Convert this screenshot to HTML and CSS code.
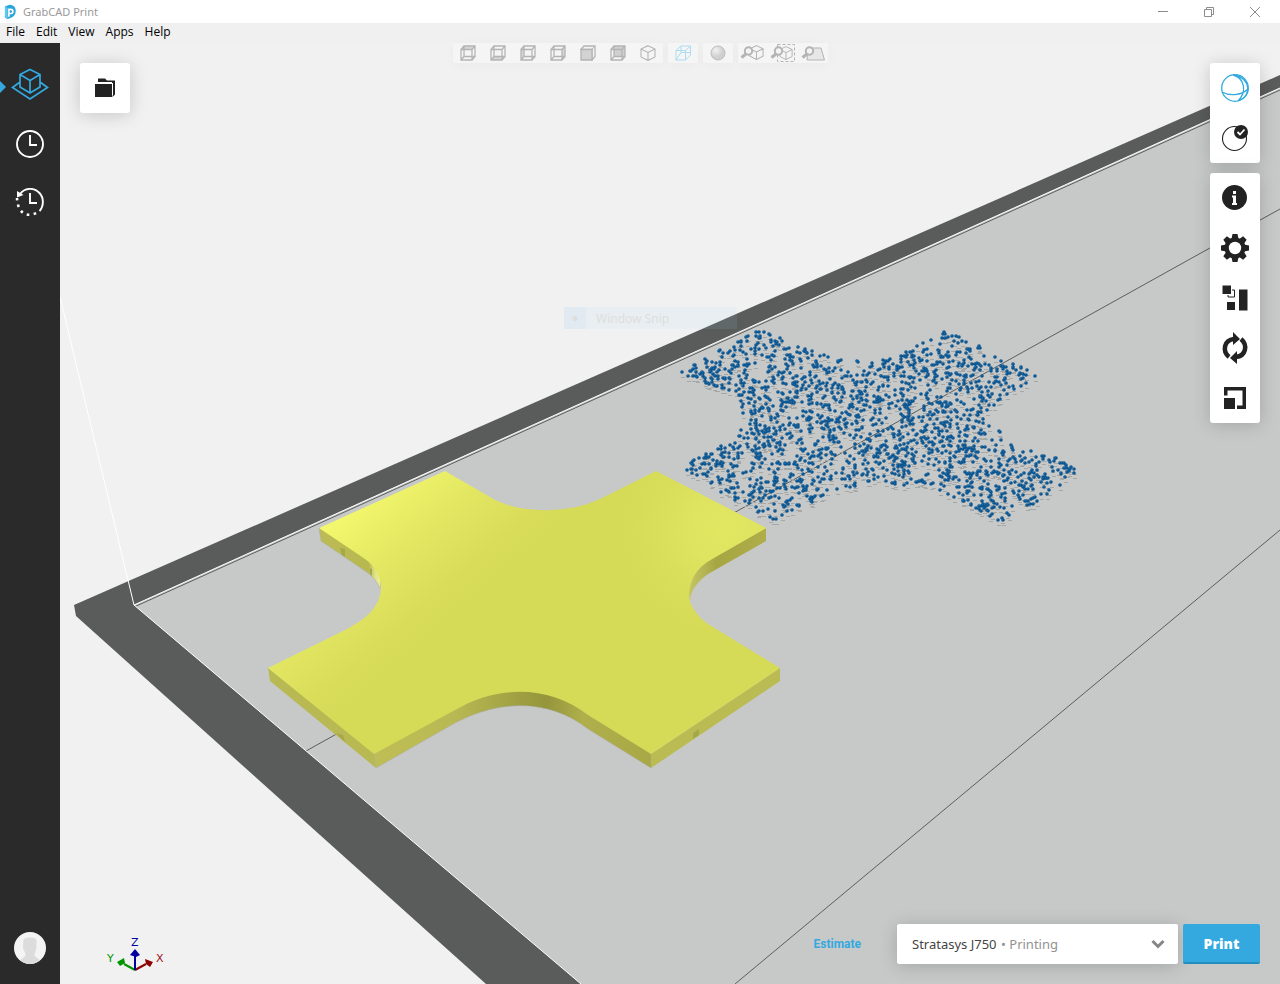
FILE: index.html
```html
<!DOCTYPE html>
<html lang="en">
<head>
<meta charset="utf-8">
<title>GrabCAD Print</title>
<link rel="stylesheet" href="styles.css">
</head>
<body>
<svg class="defs" aria-hidden="true">
  <symbol id="cube" viewBox="0 0 16 16">
    <path d="M1 4.500H12V15H1ZM4 1H15V11.500H4ZM1 4.500 4 1M12 4.500 15 1M12 15 15 11.500M1 15 4 11.500" fill="none" stroke="currentColor" stroke-width="1.300"/>
  </symbol>
  <symbol id="iso" viewBox="0 0 16 16">
    <path d="M8 .7 15 4V12L8 15.500 1 12V4ZM1 4 8 7.500 15 4M8 7.500V15.500" fill="none" stroke="currentColor" stroke-width="1.100"/>
  </symbol>
  <symbol id="lens" viewBox="0 0 14 14">
    <circle cx="8.500" cy="5" r="3.700" fill="#f4f4f4" stroke="currentColor" stroke-width="2"/>
    <path d="M6 8 1.500 11.500" stroke="currentColor" stroke-width="3"/>
  </symbol>
</svg>

<div class="app">
  <header class="titlebar">
    <svg class="logo" viewBox="0 0 14 16"><path d="M1 2 6 .3C11 .5 13 4 12.500 8 12 12 9 14.500 3.500 15.500L1 14Z" fill="#27a5dd"/><path d="M1 2 4 3.300V15.500L1 14Z" fill="#62c5ee"/><path d="M5.300 13V5.200H7.200C10.400 5.200 10.400 9.700 7.200 9.700H5.500" fill="none" stroke="#fff" stroke-width="1.700"/></svg>
    <span class="title">GrabCAD Print</span>
    <div class="window-buttons">
      <button aria-label="Minimize"><svg viewBox="0 0 12 12"><path d="M1 5.500H11"/></svg></button>
      <button aria-label="Restore"><svg viewBox="0 0 12 12"><path d="M1.500 3.500H8.500V10.500H1.500ZM3.500 3.500V1.500H10.500V8.500H8.500"/></svg></button>
      <button aria-label="Close"><svg viewBox="0 0 12 12"><path d="M1 1 11 11M11 1 1 11"/></svg></button>
    </div>
  </header>
  <nav class="menubar" aria-label="Menu">
    <button>File</button><button>Edit</button><button>View</button><button>Apps</button><button>Help</button>
  </nav>

  <div class="workspace">
    <nav class="sidebar" aria-label="Sections">
      <button class="side active" aria-label="Tray"><svg width="38" height="34" viewBox="0 0 38 34" fill="none" stroke="#33a9df" stroke-width="1.700"><path d="M19 1.500 29 6.500V19L19 25 9 19V6.500ZM9 6.500 19 12.500 29 6.500M19 12.500V25M9 14 1.500 19.500 19 31 36.500 19.500 29 14"/></svg></button>
      <button class="side" aria-label="Schedule"><svg width="30" height="30" viewBox="0 0 30 30" fill="none" stroke="#fff" stroke-width="1.900"><circle cx="15" cy="15" r="13"/><path d="M15 6V16H22"/></svg></button>
      <button class="side" aria-label="History"><svg width="30" height="30" viewBox="0 0 30 30" fill="none" stroke="#fff" stroke-width="1.900"><path d="M5 6C10 -.5 19 -.8 24.500 5 29 10 29 18 24.500 23"/><path d="M24.500 23C17 29 3 30 2 10" stroke-width="2.600" stroke-dasharray="2.600 4.400" stroke-dashoffset="-4"/><path d="M15 5V15H22"/><path d="M2 3V9.500L8.500 7Z" fill="#fff" stroke="none"/></svg></button>
      <button class="avatar" aria-label="Account"><svg width="32" height="32" viewBox="0 0 32 32"><clipPath id="round"><circle cx="16" cy="16" r="16"/></clipPath><g clip-path="url(#round)"><path fill="#f4f4f4" d="M0 0H32V32H0Z"/><path fill="#dcdcdc" d="M9.500 8C10 5 22 4.500 22.500 8V15C22.500 18 20.500 20 20.500 23 21 26 26 26 28 32H4C6 26 11 26 11.500 23 11.500 20 9 18 9 15Z"/></g></svg></button>
    </nav>

    <main class="viewport">
      <svg class="scene" viewBox="60 43 1220 941" preserveAspectRatio="xMidYMid slice" role="img" aria-label="Build tray with two models">
        <defs>
          <linearGradient id="top" gradientUnits="userSpaceOnUse" x1="350" y1="510" x2="450" y2="625"><stop offset="0" stop-color="#f2f76d"/><stop offset=".4" stop-color="#e3e762"/><stop offset=".8" stop-color="#d8dc59"/><stop offset="1" stop-color="#d5da57"/></linearGradient>
          <radialGradient id="glow" gradientUnits="userSpaceOnUse" cx="725" cy="530" r="120"><stop offset="0" stop-color="#e2e762"/><stop offset=".3" stop-color="#dfe460"/><stop offset="1" stop-color="#d6da58" stop-opacity="0"/></radialGradient>
          <linearGradient id="arch" gradientUnits="userSpaceOnUse" x1="376" y1="0" x2="651" y2="0"><stop offset="0" stop-color="#bfbe55"/><stop offset=".28" stop-color="#b9b954"/><stop offset=".46" stop-color="#a5a646"/><stop offset=".62" stop-color="#95953c"/><stop offset=".75" stop-color="#afaf4b"/><stop offset="1" stop-color="#a8a846"/></linearGradient>
          <linearGradient id="bay" gradientUnits="userSpaceOnUse" x1="320" y1="0" x2="381" y2="0"><stop offset="0" stop-color="#bcbb55"/><stop offset=".8" stop-color="#b8b850"/><stop offset=".9" stop-color="#dfe184"/><stop offset="1" stop-color="#f0f39d"/></linearGradient>
          <linearGradient id="wing" gradientUnits="userSpaceOnUse" x1="689" y1="0" x2="766" y2="0"><stop offset="0" stop-color="#c4c564"/><stop offset=".25" stop-color="#b1b04e"/><stop offset=".35" stop-color="#a6a643"/><stop offset="1" stop-color="#aead49"/></linearGradient>
        </defs>
        <path fill="#f1f1f1" d="M60 43H1280V984H60Z"/>
        <path fill="#5a5c5b" d="M74 605 1280 75V984H486L76 616Z"/>
        <path fill="#c7c9c8" d="M134 605 1280 88V984H581Z"/>
        <path fill="none" stroke="#5c5e5d" d="M134 607 1280 90M306 751 1280 209M735 984 1280 530"/>
        <path fill="none" stroke="#fff" d="M60 297 134 605 581 984M134 605 1280 88"/>
        <path id="shadows" fill="#a6a8a7"/>
        <path id="dots" fill="#0b5590"/>
        <path id="shine" fill="#1f6ca6"/>
        <path fill="url(#bay)" stroke="#adadad" stroke-width=".5" d="M319 528 321 541 368 573Q376 579 380 588L381 575 370 555Z"/>
        <path fill="url(#wing)" d="M766 528V541L708 574Q691 586 690 601L688 584 705 555Z"/>
        <path fill="#b8b953" d="M268 668 270 681 376 768 374 750Z"/>
        <path fill="url(#arch)" stroke="#adadad" stroke-width=".5" d="M374 754 376 768 455 723C500 699 550 699 588 729L651 768V750L588 710C550 680 500 680 455 704Z"/>
        <path fill="#babb52" d="M651 754V768L780 681V668Z"/>
        <path fill="url(#top)" d="M445 471 490 497C515 513 568 516 604 497L656 471 766 528 712 559C696 568 689 580 689 597 691 608 698 617 708 624L780 668 651 754 588 715C550 686 500 684 455 710L374 754 268 668 347 629C367 618 380 607 381 588 381 576 374 565 365 559L319 528Z"/>
        <path fill="url(#glow)" d="M604 497 656 471 766 528 712 559C696 568 689 580 689 597 691 608 698 617 708 624L640 660 560 560Z"/>
        <path fill="#a6a749" d="M340 548 345 549V557L342 555ZM336 733 343 735 345 742ZM370 568 372 569V576L370 574ZM693 733 699 729V735L693 739Z"/>
      </svg>

      <button class="card folder" aria-label="Open project"><svg width="22" height="22" viewBox="0 0 22 22" fill="#222"><path d="M1 7H18V20H1ZM4 1.500H11L13 3.500H21V17.500L18.500 20V18.500L19 18V6H18V5H4Z"/></svg></button>

      <aside class="tools">
        <div class="panel">
          <button aria-label="Model view"><svg viewBox="0 0 30 30" fill="none" stroke="#33a9df" stroke-width="1.300"><circle cx="15" cy="15" r="13.300"/><path d="M2 19C9 23 21 23 28 16M13 2C25 5 27 19 18 28M15 2C31 6 31 23 20 27"/></svg></button>
          <button aria-label="Validate"><svg viewBox="0 0 30 30"><circle cx="14.500" cy="15.500" r="12" fill="none" stroke="#222" stroke-width="1.100"/><circle cx="21" cy="9" r="7" fill="#222"/><path d="M17.500 9 20 11.500 24.500 6.500" fill="none" stroke="#fff" stroke-width="1.800"/></svg></button>
        </div>
        <div class="panel">
          <button aria-label="Information"><svg viewBox="0 0 30 30"><circle cx="14.500" cy="14.500" r="12.500" fill="#222"/><path fill="#fff" d="M13 8H16V11H13ZM12 12.500H16V20H17V22H12V20H13V14.500H12Z"/></svg></button>
          <button aria-label="Settings"><svg viewBox="-15 -15 30 30"><g fill="#222"><circle r="10.500"/><path id="teeth" d="M-2.500-14H2.500L3.500-9H-3.500ZM-2.500 14H2.500L3.500 9H-3.500ZM-14-2.500V2.500L-9 3.500V-3.500ZM14-2.500V2.500L9 3.500V-3.500Z"/><use href="#teeth" transform="rotate(45)"/></g><circle r="6.200" fill="#fff"/></svg></button>
          <button aria-label="Arrange"><svg viewBox="0 0 30 30" fill="#222"><path d="M2.500 2.500H11V11H2.500ZM7 19H15V27H7ZM19 6.500H27.500V27.500H19Z"/><path d="M12 7H14.500V14H8V12" fill="none" stroke="#222"/></svg></button>
          <button aria-label="Orient"><svg viewBox="0 0 30 34" fill="none" stroke="#222" stroke-width="4.500"><path d="M9 26C2 20 4 9 14 8M21 8C28 14 26 25 16 26"/><path fill="#222" stroke="none" d="M13 1 20 8 13 14ZM17 33V20L10 27Z"/></svg></button>
          <button aria-label="Scale"><svg viewBox="0 0 30 30" fill="#222"><path d="M4 15H15V26H4ZM4 4H26V26H17V22.500H22.500V7.500H7.500V12.500H4Z"/></svg></button>
        </div>
      </aside>

      <svg class="triad" width="70" height="40" viewBox="0 0 70 40" role="img" aria-label="Axes">
        <path d="M35 34 24 28" stroke="#009500" stroke-width="2"/><path d="M35 34 46 28" stroke="#8b0000" stroke-width="2"/><path d="M35 34V18" stroke="#0000a0" stroke-width="2"/>
        <path d="M17 26 24 22 25 27 20 30Z" fill="#009500"/><path d="M53 26 45 23 46 28 50 31Z" fill="#8b0000"/><path d="M30 19 35 13 40 19 36 21Z" fill="#0000a0"/>
        <text x="7" y="26" fill="#009500">Y</text><text x="31" y="10" fill="#0000a0">Z</text><text x="56" y="26" fill="#a01010">X</text>
      </svg>

      <form class="printbar">
        <button type="button" class="estimate">Estimate</button>
        <label class="printer">
          <select aria-label="Printer"><option>Stratasys J750</option></select>
          <span class="status">• Printing</span>
          <svg class="chevron" width="14" height="10" viewBox="0 0 14 10"><path d="M1.500 2 7 7.500 12.500 2" fill="none" stroke="#858585" stroke-width="3"/></svg>
        </label>
        <button type="button" class="print">Print</button>
      </form>
    </main>

    <div class="viewbar">
      <div class="group">
        <button aria-label="Top"><svg viewBox="0 0 16 16"><path d="M1 4.500 4 1H15L12 4.500Z" fill="#d6d6d6"/><use href="#cube"/></svg></button>
        <button aria-label="Bottom"><svg viewBox="0 0 16 16"><path d="M1 15 4 11.500H15L12 15Z" fill="#d6d6d6"/><use href="#cube"/></svg></button>
        <button aria-label="Left"><svg viewBox="0 0 16 16"><path d="M1 4.500 4 1V11.500L1 15Z" fill="#d6d6d6"/><use href="#cube"/></svg></button>
        <button aria-label="Right"><svg viewBox="0 0 16 16"><path d="M12 4.500 15 1V11.500L12 15Z" fill="#d6d6d6"/><use href="#cube"/></svg></button>
        <button aria-label="Front"><svg viewBox="0 0 16 16"><path d="M1 4.500 4 1H15V11.500L12 15V4.500Z" fill="#f5f5f5" stroke="currentColor" stroke-width="1.300"/><path d="M1 4.500H12V15H1Z" fill="#d3d3d3" stroke="currentColor" stroke-width="1.300"/><path d="M12 4.500 15 1" stroke="currentColor"/></svg></button>
        <button aria-label="Back"><svg viewBox="0 0 16 16"><path d="M4 1H15V11.500H4Z" fill="#d0d0d0"/><use href="#cube"/></svg></button>
        <button aria-label="Isometric"><svg viewBox="0 0 16 16"><use href="#iso"/></svg></button>
      </div>
      <div class="group"><button class="on" aria-label="Perspective"><svg viewBox="0 0 16 16"><path d="M1 5.500H10.500V15H1ZM1 5.500 6 1H15.500L10.500 5.500M15.500 1V10L10.500 15M6 1V7.500H15.500M1 15 6 7.500" fill="none" stroke="currentColor"/></svg></button></div>
      <div class="group"><button aria-label="Shading"><svg viewBox="0 0 16 16"><defs><radialGradient id="ball" cx=".35" cy=".3"><stop stop-color="#f2f2f2"/><stop offset="1" stop-color="#cfcfcf"/></radialGradient></defs><circle cx="8" cy="8" r="7" fill="url(#ball)" stroke="#bdbdbd"/></svg></button></div>
      <div class="group">
        <button aria-label="Zoom to model"><svg class="wide" viewBox="0 0 24 18"><use href="#iso" x="8" y="1" width="15" height="15"/><use href="#lens" x="-1" y="2" width="14" height="14"/></svg></button>
        <button aria-label="Zoom to selection"><svg class="wide" viewBox="0 0 24 18"><path d="M6.500 .5H23.500V17.500H6.500Z" fill="none" stroke="currentColor" stroke-dasharray="3 2"/><use href="#iso" x="8" y="2" width="14" height="14"/><use href="#lens" x="-1" y="2" width="14" height="14"/></svg></button>
        <button aria-label="Zoom to tray"><svg class="wide" viewBox="0 0 24 18"><path d="M7 4H20L23.500 16H6Z" fill="#e7e7e7" stroke="currentColor"/><use href="#lens" x="0" y="2" width="14" height="14"/></svg></button>
      </div>
    </div>
    <div class="snip"><span class="snip-dot">●</span><span class="snip-text">Window Snip</span></div>
  </div>
</div>
<script src="scene.js"></script>
</body>
</html>
```

FILE: styles.css
```css
* { box-sizing: border-box; }
body { margin: 0; font-family: "Open Sans", "Noto Sans", sans-serif; font-size: 12px; color: #222; }
button { margin: 0; padding: 0; border: 0; background: none; font: inherit; color: inherit; cursor: pointer; }
svg { display: block; flex: none; }
.defs { position: absolute; width: 0; height: 0; }
.app { display: flex; flex-direction: column; height: 100vh; overflow: hidden; }

.titlebar { display: flex; align-items: center; height: 23px; padding-left: 4px; background: #fff; }
.logo { width: 13px; height: 16px; }
.title { margin-left: 6px; color: #999; font-family: "Noto Sans", sans-serif; font-size: 11px; }
.window-buttons { display: flex; margin-left: auto; padding-right: 2px; }
.window-buttons button { display: grid; place-items: center; width: 46px; height: 20px; }
.window-buttons svg { width: 12px; height: 12px; fill: none; stroke: #8c8c8c; }
.menubar { display: flex; align-items: flex-start; gap: 11px; height: 20px; padding-left: 6px; background: #f0f0f0; color: #000; line-height: 18px; }

.workspace { position: relative; display: flex; flex: 1; min-height: 0; }
.sidebar { display: flex; flex-direction: column; width: 60px; padding: 12px 0 20px; background: #2a2a2a; }
.side { position: relative; display: grid; place-items: center; height: 59px; }
.active::before { content: ""; position: absolute; left: 0; top: 26px; border: 6px solid transparent; border-left-color: #33a9df; border-right-width: 0; }
.avatar { margin: auto auto 0; }

.viewport { position: relative; flex: 1; background: #f1f1f1; overflow: hidden; }
.scene { position: absolute; inset: 0; width: 100%; height: 100%; }
.card, .panel { background: #fff; border-radius: 3px; box-shadow: 0 2px 18px rgba(0, 0, 0, .18); }
.folder { position: absolute; left: 20px; top: 20px; display: grid; place-items: center; width: 50px; height: 50px; }
.tools { position: absolute; top: 20px; right: 20px; display: flex; flex-direction: column; gap: 10px; }
.panel { display: flex; flex-direction: column; }
.panel button { display: grid; place-items: center; width: 50px; height: 50px; }
.panel svg { width: 30px; height: 34px; }

.triad { position: absolute; left: 40px; bottom: 8px; overflow: visible; font-family: "DejaVu Sans", sans-serif; font-size: 11px; }

.printbar { position: absolute; right: 20px; bottom: 20px; display: flex; align-items: center; gap: 5px; height: 40px; }
.estimate { margin-right: 31px; font-family: Roboto, sans-serif; font-size: 12px; font-weight: 700; color: #33a9df; }
.printer { display: flex; align-items: center; gap: 4px; width: 281px; height: 40px; padding: 0 13px 0 15px; background: #fff; border-radius: 2px; box-shadow: 0 2px 18px rgba(0, 0, 0, .18); font-family: "Noto Sans", sans-serif; font-size: 13px; }
.printer select { appearance: none; margin: 0; padding: 0; border: 0; background: none; color: #444; font: inherit; }
.status { color: #929292; }
.chevron { margin-left: auto; }
.print { width: 77px; height: 40px; border-radius: 2px; border-bottom: 2px solid #208ebf; background: #33a9df; color: #fff; font-size: 14px; font-weight: 800; }

.viewbar { position: absolute; top: 0; left: 0; right: 0; display: flex; justify-content: center; gap: 5px; pointer-events: none; }
.group { display: flex; border-radius: 2px; background: #f5f5f5; box-shadow: 0 2px 12px rgba(0, 0, 0, .03); }
.group button { display: grid; place-items: center; width: 30px; height: 20px; color: #b4b4b4; pointer-events: auto; }
.group svg { width: 16px; height: 16px; }
.group .wide { width: 24px; height: 18px; overflow: visible; }
.group .on { color: #aadcf2; }

.snip { position: absolute; left: 564px; top: 264px; display: flex; align-items: center; width: 173px; height: 22px; background: rgba(161, 220, 250, .1); color: #dedede; }
.snip-dot { width: 22px; height: 22px; line-height: 22px; text-align: center; background: rgba(180, 205, 250, .12); }
.snip-text { margin-left: 10px; font-family: "Noto Sans", sans-serif; }
```

FILE: scene.js
```js
// Scatters the point-cloud model over its star-shaped footprint.
(function () {
  var outline = [[677, 372], [718, 351], [758, 329], [800, 346], [838, 360], [880, 360], [912, 347], [942, 329],
    [990, 350], [1040, 374], [1003, 398], [988, 412], [992, 425], [1014, 443], [1082, 467], [1048, 495],
    [1002, 523], [960, 500], [925, 486], [865, 484], [830, 495], [776, 522], [735, 500], [677, 468],
    [728, 442], [742, 428], [741, 402], [725, 392]];
  var seed = 11;
  function random() {
    seed = (seed * 1664525 + 1013904223) % 4294967296;
    return seed / 4294967296;
  }
  function inside(x, y) {
    var hit = false;
    for (var i = 0, j = outline.length - 1; i < outline.length; j = i++) {
      var a = outline[i], b = outline[j];
      if ((a[1] > y) !== (b[1] > y) && x < (b[0] - a[0]) * (y - a[1]) / (b[1] - a[1]) + a[0]) hit = !hit;
    }
    return hit;
  }
  function disc(x, y, r) {
    return "M" + (x - r) + " " + y + "a" + r + " " + r + " 0 1 0 " + 2 * r + " 0a" + r + " " + r + " 0 1 0 " + -2 * r + " 0";
  }
  var points = [];
  while (points.length < 1900) {
    var x = Math.round(677 + random() * 405), y = Math.round(329 + random() * 194);
    if (inside(x, y)) points.push([x, y]);
  }
  var dots = "", shadows = "", shine = "";
  points.forEach(function (p) {
    dots += disc(p[0], p[1], 1.8);
    shine += disc(p[0] - 0.5, p[1] - 0.5, 0.6);
    shadows += "M" + (p[0] - 1) + " " + (p[1] + 5) + "h4v1h-4z";
  });
  document.getElementById("shadows").setAttribute("d", shadows);
  document.getElementById("dots").setAttribute("d", dots);
  document.getElementById("shine").setAttribute("d", shine);
})();
```
